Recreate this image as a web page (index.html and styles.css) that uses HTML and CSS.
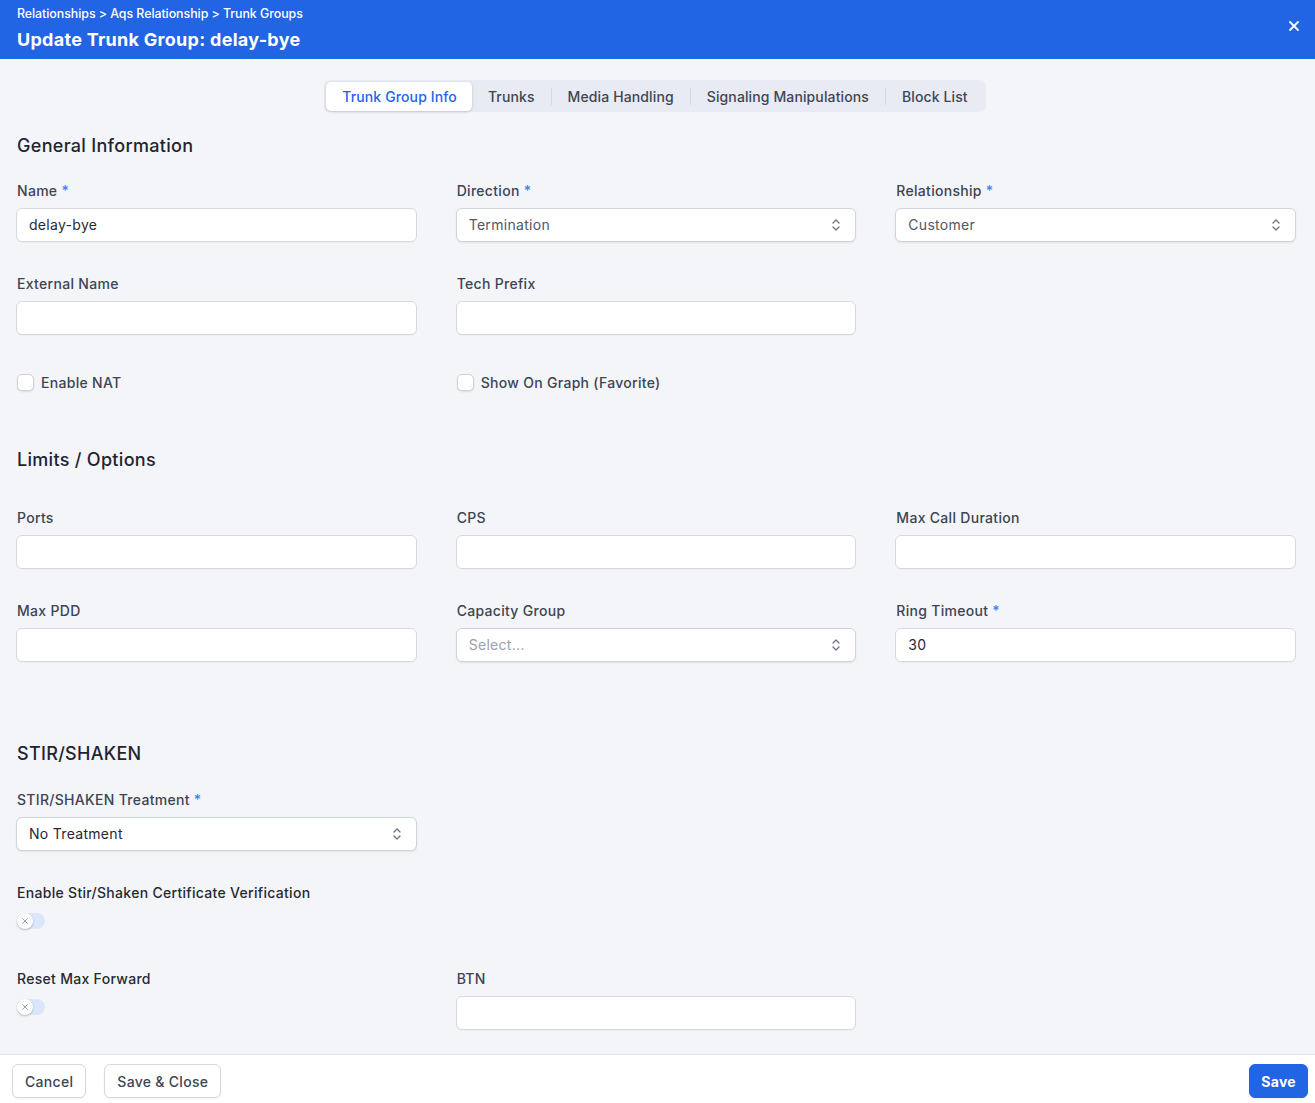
FILE: index.html
```html
<!DOCTYPE html>
<html>
<head>
<meta charset="utf-8">
<link rel="stylesheet" href="styles.css">
</head>
<body>
<div class="app">
  <header class="header">
    <div class="titles">
      <div class="crumbs">Relationships &gt; Aqs Relationship &gt; Trunk Groups</div>
      <div class="title">Update Trunk Group: delay-bye</div>
    </div>
    <svg class="close" width="12" height="12" viewBox="0 0 12 12"><path d="M2 2 L10 10 M10 2 L2 10" stroke="#fff" stroke-width="1.8" stroke-linecap="round"/></svg>
  </header>

  <main class="content">
    <div class="tabs-wrap">
      <nav class="tabs">
        <span class="tab active">Trunk Group Info</span>
        <span class="tab">Trunks</span>
        <span class="sep"></span>
        <span class="tab">Media Handling</span>
        <span class="sep"></span>
        <span class="tab">Signaling Manipulations</span>
        <span class="sep"></span>
        <span class="tab">Block List</span>
      </nav>
    </div>

    <h2 class="section-title first">General Information</h2>
    <div class="grid g1">
      <div class="field">
        <label class="label">Name <span class="req">*</span></label>
        <div class="input"><span class="val">delay-bye</span></div>
      </div>
      <div class="field">
        <label class="label">Direction <span class="req">*</span></label>
        <div class="input select"><span class="sel-val">Termination</span><svg class="chev" width="10" height="14" viewBox="0 0 10 14"><path d="M2 5 L5 2 L8 5 M2 9 L5 12 L8 9" fill="none" stroke="#6b7280" stroke-width="1.3" stroke-linecap="round" stroke-linejoin="round"/></svg></div>
      </div>
      <div class="field">
        <label class="label">Relationship <span class="req">*</span></label>
        <div class="input select"><span class="sel-val">Customer</span><svg class="chev" width="10" height="14" viewBox="0 0 10 14"><path d="M2 5 L5 2 L8 5 M2 9 L5 12 L8 9" fill="none" stroke="#6b7280" stroke-width="1.3" stroke-linecap="round" stroke-linejoin="round"/></svg></div>
      </div>
      <div class="field">
        <label class="label">External Name</label>
        <div class="input"></div>
      </div>
      <div class="field">
        <label class="label">Tech Prefix</label>
        <div class="input"></div>
      </div>
      <div class="field"></div>
      <div class="check-row">
        <span class="checkbox"></span><span class="check-label">Enable NAT</span>
      </div>
      <div class="check-row">
        <span class="checkbox"></span><span class="check-label">Show On Graph (Favorite)</span>
      </div>
    </div>

    <h2 class="section-title limits">Limits / Options</h2>
    <div class="grid g2">
      <div class="field">
        <label class="label">Ports</label>
        <div class="input"></div>
      </div>
      <div class="field">
        <label class="label">CPS</label>
        <div class="input"></div>
      </div>
      <div class="field">
        <label class="label">Max Call Duration</label>
        <div class="input"></div>
      </div>
      <div class="field">
        <label class="label">Max PDD</label>
        <div class="input"></div>
      </div>
      <div class="field">
        <label class="label">Capacity Group</label>
        <div class="input select"><span class="placeholder">Select...</span><svg class="chev" width="10" height="14" viewBox="0 0 10 14"><path d="M2 5 L5 2 L8 5 M2 9 L5 12 L8 9" fill="none" stroke="#6b7280" stroke-width="1.3" stroke-linecap="round" stroke-linejoin="round"/></svg></div>
      </div>
      <div class="field">
        <label class="label">Ring Timeout <span class="req">*</span></label>
        <div class="input"><span class="val">30</span></div>
      </div>
    </div>

    <h2 class="section-title stir">STIR/SHAKEN</h2>
    <div class="grid g3">
      <div class="field">
        <label class="label">STIR/SHAKEN Treatment <span class="req">*</span></label>
        <div class="input select"><span class="val">No Treatment</span><svg class="chev" width="10" height="14" viewBox="0 0 10 14"><path d="M2 5 L5 2 L8 5 M2 9 L5 12 L8 9" fill="none" stroke="#6b7280" stroke-width="1.3" stroke-linecap="round" stroke-linejoin="round"/></svg></div>
      </div>
      <div class="field"></div>
      <div class="field"></div>
      <div class="field span2">
        <label class="label dark">Enable Stir/Shaken Certificate Verification</label>
        <span class="toggle"><span class="knob"><svg width="8" height="8" viewBox="0 0 8 8"><path d="M1.5 1.5 L6.5 6.5 M6.5 1.5 L1.5 6.5" stroke="#9ca3af" stroke-width="1" stroke-linecap="round"/></svg></span></span>
      </div>
      <div class="field"></div>
    </div>
    <div class="grid g4">
      <div class="field">
        <label class="label dark">Reset Max Forward</label>
        <span class="toggle t2"><span class="knob"><svg width="8" height="8" viewBox="0 0 8 8"><path d="M1.5 1.5 L6.5 6.5 M6.5 1.5 L1.5 6.5" stroke="#9ca3af" stroke-width="1" stroke-linecap="round"/></svg></span></span>
      </div>
      <div class="field">
        <label class="label">BTN</label>
        <div class="input"></div>
      </div>
      <div class="field"></div>
    </div>
  </main>

  <footer class="footer">
    <div class="left-btns">
      <button class="btn">Cancel</button>
      <button class="btn">Save &amp; Close</button>
    </div>
    <button class="btn primary">Save</button>
  </footer>
</div>
</body>
</html>
```
FILE: styles.css
```css
* { box-sizing: border-box; }
html, body { margin: 0; padding: 0; }
body {
  font-family: Inter, "Noto Sans", sans-serif;
  background: #f4f5f9;
  color: #1f2937;
}
.app {
  height: 1103px;
  display: flex;
  flex-direction: column;
  overflow: hidden;
}
.header {
  height: 59px;
  flex: none;
  background: #2164e4;
  display: flex;
  align-items: flex-start;
  justify-content: space-between;
  padding: 0 15px 0 17px;
  color: #fff;
}
.crumbs {
  font-size: 12.4px;
  font-weight: 500;
  line-height: 16px;
  margin-top: 6px;
  letter-spacing: -0.05px;
}
.title {
  font-size: 18px;
  font-weight: 700;
  line-height: 24px;
  margin-top: 6px;
  letter-spacing: 0.28px;
}
.close { margin-top: 20px; }

.content {
  flex: 1;
  overflow: hidden;
  padding: 21px 19px 0 16px;
}
.tabs-wrap { display: flex; justify-content: center; padding-right: 2px; }
.tabs {
  display: flex;
  align-items: center;
  background: #e8ebf3;
  border-radius: 6px;
  padding: 2px;
  height: 32px;
}
.tab {
  padding: 0 16px;
  font-size: 14px;
  font-weight: 500;
  color: #3f4653;
  line-height: 30px;
  height: 29px;
  letter-spacing: 0.12px;
}
.tab.active {
  background: #fff;
  color: #2563eb;
  border-radius: 5px;
  box-shadow: 0 1px 3px rgba(0,0,0,0.18);
  padding: 0 15px 0 16px;
}
.sep {
  width: 1px;
  height: 17px;
  background: #d4d8e1;
}
.section-title {
  margin: 0;
  font-size: 18px;
  font-weight: 500;
  line-height: 24px;
  color: #1f2430;
  padding-left: 1px;
  letter-spacing: 0.3px;
}
.section-title.first { margin-top: 22px; }
.section-title.limits { margin-top: 51px; }
.section-title.stir { margin-top: 80px; }

.grid {
  display: grid;
  grid-template-columns: repeat(3, 1fr);
  column-gap: 39px;
  row-gap: 32px;
}
.g1 { margin-top: 23px; }
.g2 { margin-top: 36px; }
.g3 { margin-top: 24px; }
.g4 { margin-top: 40px; }
.field { display: flex; flex-direction: column; min-width: 0; }
.span2 { grid-column: span 2; }
.label {
  font-size: 14px;
  font-weight: 500;
  line-height: 20px;
  color: #3d4452;
  margin-bottom: 7px;
  padding-left: 1px;
  letter-spacing: 0.3px;
}
.label.dark { color: #252a33; }
.req { color: #3b82f6; }
.input {
  height: 34px;
  background: #fff;
  border: 1px solid #d6d9e0;
  border-radius: 6px;
  display: flex;
  align-items: center;
  padding: 0 12px;
  font-size: 14px;
  line-height: 20px;
  box-shadow: 0 1px 1px rgba(0,0,0,0.03);
}
.input span { margin-top: -1px; }
.select {
  justify-content: space-between;
  border-color: #cfd3da;
  box-shadow: 0 1px 2px rgba(0,0,0,0.08);
  padding-right: 14px;
}
.val { color: #1f2937; letter-spacing: 0.3px; }
.sel-val { color: #505866; letter-spacing: 0.3px; }
.placeholder { color: #9aa1ad; letter-spacing: 0.3px; }
.chev { flex: none; }

.check-row {
  display: flex;
  align-items: center;
  height: 30px;
}
.checkbox {
  width: 17px;
  height: 17px;
  border: 1px solid #cfd3da;
  border-radius: 5px;
  background: #fff;
  box-shadow: 0 1px 2px rgba(0,0,0,0.1);
  margin-left: 1px;
  margin-right: 7px;
}
.check-label {
  font-size: 14px;
  font-weight: 500;
  color: #3d4452;
  letter-spacing: 0.3px;
}

.toggle {
  width: 28px;
  height: 16px;
  border-radius: 8px;
  background: #dbe6fb;
  position: relative;
  margin-top: 3px;
  margin-left: 1px;
}
.knob {
  position: absolute;
  left: 0;
  top: 0;
  width: 16px;
  height: 16px;
  border-radius: 50%;
  background: #fff;
  box-shadow: 0 1px 2px rgba(0,0,0,0.25);
  display: flex;
  align-items: center;
  justify-content: center;
}

.footer {
  flex: none;
  height: 49px;
  background: #fff;
  border-top: 1px solid #e3e6ec;
  display: flex;
  justify-content: space-between;
  align-items: flex-start;
  padding: 9px 7px 0 12px;
}
.left-btns { display: flex; gap: 18px; }
.btn {
  font-family: Inter, "Noto Sans", sans-serif;
  height: 34px;
  padding: 0 12px;
  font-size: 14px;
  font-weight: 500;
  color: #3d4452;
  background: #fff;
  border: 1px solid #d6d9e0;
  border-radius: 6px;
  box-shadow: 0 1px 2px rgba(0,0,0,0.06);
  letter-spacing: 0.3px;
}
.btn.primary {
  background: #2164e4;
  border-color: #2164e4;
  color: #fff;
  font-weight: 700;
  padding: 0 11px;
}
```
